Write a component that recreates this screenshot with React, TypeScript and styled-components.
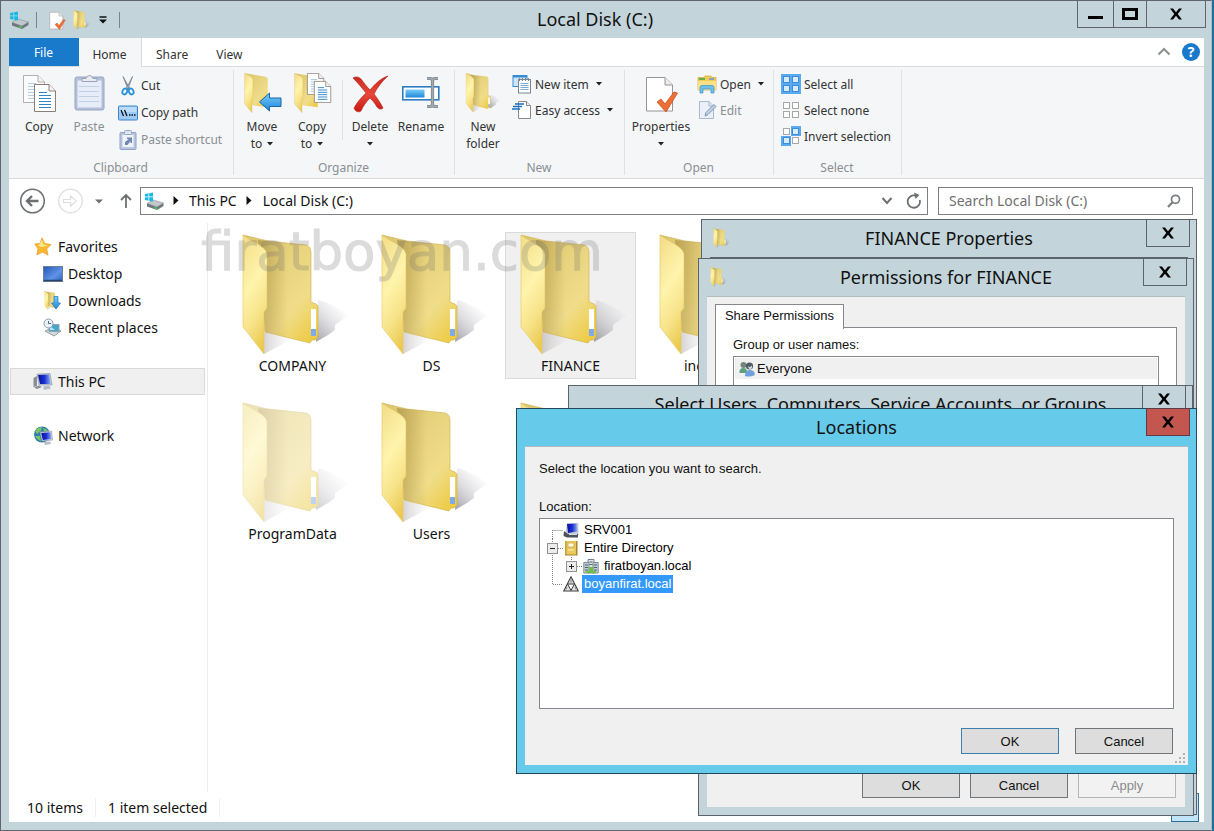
import React from "react";
import styled, { createGlobalStyle, css } from "styled-components";

const GlobalStyle = createGlobalStyle`
  * { box-sizing: border-box; }
  body {
    margin: 0;
    background: #1f6f97;
    font-family: "Noto Sans", "Open Sans", sans-serif;
    font-size: 14px;
    color: #111;
  }
  button, input { font: inherit; color: inherit; }
  button {
    display: inline-flex;
    align-items: center;
    justify-content: center;
    padding: 0;
    margin: 0;
    border: 0;
    background: none;
  }
  ul { list-style: none; margin: 0; padding: 0; }
  h1, h2, p { margin: 0; font-weight: 400; }
  svg { display: block; flex: none; }
`;

const frame = "#c3d5db";
const uiFont = `"Liberation Sans", Arial, sans-serif`;

/* ---------- icons ---------- */

const GradientSheet = styled.svg`
  position: absolute;
`;

const SharedGradients = () => (
  <GradientSheet width="0" height="0" aria-hidden="true">
    <defs>
      <linearGradient id="folderBack" x1="0.1" y1="0" x2="0.9" y2="1">
        <stop offset="0" stopColor="#dcc570" />
        <stop offset="0.35" stopColor="#e7d27c" />
        <stop offset="0.7" stopColor="#f0dd8a" />
        <stop offset="1" stopColor="#edca40" />
      </linearGradient>
      <linearGradient id="folderFold" x1="0" y1="0" x2="1" y2="0">
        <stop offset="0" stopColor="#8d7430" stopOpacity="0.45" />
        <stop offset="1" stopColor="#8d7430" stopOpacity="0" />
      </linearGradient>
      <linearGradient id="folderFront" x1="0.3" y1="0" x2="0.6" y2="1">
        <stop offset="0" stopColor="#f4e08c" />
        <stop offset="0.4" stopColor="#fff4ac" />
        <stop offset="0.7" stopColor="#f7e38a" />
        <stop offset="1" stopColor="#ebc94e" />
      </linearGradient>
      <linearGradient id="folderShadow" x1="0" y1="1" x2="0.7" y2="0.1">
        <stop offset="0" stopColor="#6e6e78" stopOpacity="0.65" />
        <stop offset="0.5" stopColor="#8a8a94" stopOpacity="0.3" />
        <stop offset="1" stopColor="#9a9aa4" stopOpacity="0" />
      </linearGradient>
      <linearGradient id="folderGlow" x1="0" y1="0" x2="1" y2="0">
        <stop offset="0" stopColor="#7a6d6d" stopOpacity="0.3" />
        <stop offset="1" stopColor="#b0b0b0" stopOpacity="0" />
      </linearGradient>
      <linearGradient id="blueArrow" x1="0" y1="0" x2="0" y2="1">
        <stop offset="0" stopColor="#7ccdf8" />
        <stop offset="1" stopColor="#1d86da" />
      </linearGradient>
      <linearGradient id="redCross" x1="0" y1="0" x2="0" y2="1">
        <stop offset="0" stopColor="#c7261d" />
        <stop offset="0.5" stopColor="#e8483a" />
        <stop offset="1" stopColor="#c91a10" />
      </linearGradient>
      <linearGradient id="screenBlue" x1="0" y1="0" x2="1" y2="1">
        <stop offset="0" stopColor="#2256b8" />
        <stop offset="0.6" stopColor="#5f93e6" />
        <stop offset="1" stopColor="#2f62c0" />
      </linearGradient>
      <linearGradient id="monitorBlue" x1="0" y1="0" x2="1" y2="0">
        <stop offset="0" stopColor="#0a12a0" />
        <stop offset="0.5" stopColor="#1a2fd0" />
        <stop offset="1" stopColor="#8fb0f4" />
      </linearGradient>
    </defs>
  </GradientSheet>
);

const FolderShapes = () => (
  <>
    <path d="M78 66 C90 69 100 75 109 81 L95 91 L95 96 L88 101 L76 108Z" fill="url(#folderShadow)" />
    <path d="M24 98 L52 105 L24 120Z" fill="url(#folderGlow)" />
    <path d="M3 1 L28 7 L66 11 Q71 12 71 19 L71 68 L76 70 Q78 71 78 73 L78 103 L75 106 L72 106 L70 109 L25 98Z" fill="url(#folderBack)" stroke="#cfae4a" strokeWidth="0.6" />
    <path d="M18 6 L48 9 L48 103 L25 98Z" fill="url(#folderFold)" />
    <path d="M71 75 h5 v26 h-5z" fill="#fff" />
    <path d="M71 95 h5 v7 h-5z" fill="#7fa9e8" />
    <path d="M3 1 C10 7 26 12 27 20 L27 74 L24 78 L24 120 L3 93Z" fill="url(#folderFront)" stroke="#e4c661" strokeWidth="0.6" />
  </>
);

const Folder = ({ size = 122, faded = false }: { size?: number; faded?: boolean }) => (
  <svg width={Math.round((size * 110) / 122)} height={size} viewBox={size > 60 ? "-2 0 110 122" : "0 0 110 122"} opacity={faded ? 0.5 : 1} overflow="visible">
    <FolderShapes />
  </svg>
);

const Caret = ({ color = "#222" }: { color?: string }) => (
  <svg width="6" height="4" viewBox="0 0 6 4"><path d="M0 0 H6 L3 3.5Z" fill={color} /></svg>
);

const Sheet = ({ x, y, s = 1, lines = "#2d86c8" }: { x: number; y: number; s?: number; lines?: string }) => (
  <g transform={`translate(${x} ${y}) scale(${s})`}>
    <path d="M0.5 0.5 H15 L21.5 7 V27.5 H0.5Z" fill="#fff" stroke="#8a7f7a" />
    <path d="M15 0.5 V7 H21.5" fill="#f3f3f3" stroke="#8a7f7a" />
    <path d="M5 8.5h8M5 11.5h12M5 14.5h12M5 17.5h12M5 20.5h12M5 23.5h12" stroke={lines} strokeWidth="1.2" />
  </g>
);

const CopyIcon = () => (
  <svg width="36" height="40" viewBox="0 0 36 40">
    <g opacity="0.6"><Sheet x={2} y={2} lines="#8fb4d2" /></g>
    <Sheet x={13} y={11} />
  </svg>
);

const Clip = ({ shortcut = false }: { shortcut?: boolean }) => (
  <svg width={shortcut ? 18 : 34} height={shortcut ? 20 : 40} viewBox={shortcut ? "0 0 18 20" : "0 0 34 40"}>
    {shortcut ? (
      <>
        <rect x="1" y="2.5" width="16" height="17" rx="1" fill="#b9c6de" stroke="#8fa2c4" />
        <rect x="3.5" y="5" width="11" height="12" fill="#eef3fb" />
        <rect x="5.5" y="0.5" width="7" height="4" rx="1" fill="#dfe5ef" stroke="#98a7c2" />
        <path d="M6 15 V12 L10 9 H8 V7.5 H13 V13 H11.5 V11 L8.5 15Z" fill="#6f86ae" />
      </>
    ) : (
      <>
        <rect x="3" y="4" width="29" height="33" rx="2" fill="#b3c0d8" stroke="#98a7c4" />
        <path d="M5.5 7.5 H29.5 V34.5 H5.5Z" fill="#e6edf8" />
        <path d="M7 13.5h20M7 18.5h20M7 23.5h20M7 28.5h20" stroke="#c3cfe2" />
        <path d="M10 8.5 V5.5 H14 Q15 2.5 17.5 2.5 Q20 2.5 21 5.5 H25 V8.5Z" fill="#e8ebf0" stroke="#98a3b8" />
      </>
    )}
  </svg>
);

const CutIcon = () => (
  <svg width="14" height="20" viewBox="0 0 14 20">
    <path d="M2 0.5 L8.5 12 L7 13Z" fill="#8b95a0" stroke="#7b8590" strokeWidth="0.8" />
    <path d="M11.5 0.5 L5.5 12 L7 13Z" fill="#a9b3bd" stroke="#7b8590" strokeWidth="0.8" />
    <ellipse cx="3.8" cy="15.5" rx="2.3" ry="3" fill="none" stroke="#2791d8" strokeWidth="1.8" transform="rotate(25 3.8 15.5)" />
    <ellipse cx="10.2" cy="15.5" rx="2.3" ry="3" fill="none" stroke="#2791d8" strokeWidth="1.8" transform="rotate(-25 10.2 15.5)" />
  </svg>
);

const CopyPathIcon = () => (
  <svg width="20" height="16" viewBox="0 0 20 16">
    <rect x="0.5" y="1" width="19" height="14" rx="1" fill="#9ccaf7" stroke="#3e84cc" />
    <rect x="1.5" y="2" width="17" height="5" fill="#bcdcfb" />
    <path d="M3 5 L5.5 11 M6.5 5 L9 11" stroke="#111" strokeWidth="1.3" />
    <path d="M11 10h1.5M13.5 10h1.5M16 10h1.5" stroke="#111" strokeWidth="1.5" />
  </svg>
);

const MoveToIcon = () => (
  <svg width="40" height="40" viewBox="0 0 40 40">
    <g transform="translate(2 0) scale(0.33)">
      <path d="M3 1 L66 11 Q72 12 72 19 V104 L25 98Z" fill="url(#folderBack)" />
      <path d="M2 1 C10 6 26 11 27 20 V74 L24 78 V120 L2 93Z" fill="url(#folderFront)" stroke="#d8b64e" />
    </g>
    <path d="M17.5 29 L27.5 20 V25 H39 V33.5 H27.5 V38Z" fill="url(#blueArrow)" stroke="#1667ae" />
  </svg>
);

const CopyToIcon = () => (
  <svg width="40" height="40" viewBox="0 0 40 40">
    <g transform="translate(2 0) scale(0.33)">
      <path d="M3 1 L66 11 Q72 12 72 19 V104 L25 98Z" fill="url(#folderBack)" />
    </g>
    <Sheet x={15} y={0} s={0.78} lines="#9cc3e2" />
    <g transform="translate(2 0) scale(0.33)">
      <path d="M2 1 C10 6 26 11 27 20 V74 L24 78 V120 L2 93Z" fill="url(#folderFront)" stroke="#d8b64e" />
    </g>
    <Sheet x={22} y={8} s={0.78} />
  </svg>
);

const DeleteIcon = () => (
  <svg width="38" height="40" viewBox="0 0 38 40">
    <path d="M2 5 C5 3 8 4 10 6 C13 10 16 14 19 17 C24 11 30 5 37 3 C31 8 26 15 23 21 C27 26 30 31 32 35 C30 37 28 36 26 34 C24 30 21 27 19 25 C15 29 12 33 10 38 C7 40 4 38 3 35 C6 29 11 24 15 20 C11 15 7 10 2 5Z" fill="url(#redCross)" stroke="#b01810" strokeWidth="0.6" />
  </svg>
);

const beam = "M25 5.5 H28 Q30.5 5.5 30.5 8 Q30.5 5.5 33 5.5 H36 M30.5 7 V32 M25 33.5 H28 Q30.5 33.5 30.5 31 Q30.5 33.5 33 33.5 H36";
const RenameIcon = () => (
  <svg width="38" height="40" viewBox="0 0 38 40">
    <rect x="0.8" y="13.8" width="36" height="13" fill="#fff" stroke="#2d7cc0" strokeWidth="1.6" />
    <rect x="3.5" y="16.5" width="19" height="8" fill="url(#blueArrow)" />
    <path d={beam} fill="none" stroke="#7e868e" strokeWidth="3.2" />
    <path d={beam} fill="none" stroke="#a2aab2" strokeWidth="1.5" />
  </svg>
);

const NewItemIcon = () => (
  <svg width="20" height="20" viewBox="0 0 20 20">
    <rect x="1" y="1.5" width="14" height="11" fill="#cfe6fa" stroke="#3b8bd0" />
    <path d="M1 2.5h14" stroke="#3b8bd0" strokeWidth="2" />
    <rect x="6.5" y="5.5" width="12" height="13.5" fill="#fff" stroke="#7d8790" />
    <path d="M7.5 4v3M10.5 4v3M13.5 4v3M16.5 4v3" stroke="#7d8790" />
    <path d="M8.5 9.5h8M8.5 11.5h8M8.5 13.5h8M8.5 15.5h8" stroke="#7fa9cf" />
  </svg>
);

const EasyAccessIcon = () => (
  <svg width="20" height="20" viewBox="0 0 20 20">
    <path d="M6.5 1.5 H14.5 L18.5 5.5 V18.5 H6.5Z" fill="#fff" stroke="#8a8a8a" />
    <path d="M14.5 1.5 V5.5 H18.5" fill="#eee" stroke="#8a8a8a" />
    <path d="M3 4h9M1 6.5h9M0 9h8" stroke="#1b6fc4" strokeWidth="1.4" />
  </svg>
);

const PropertiesIcon = ({ w = 34, h = 40 }: { w?: number; h?: number }) => (
  <svg width={w} height={h} viewBox="0 0 34 40">
    <path d="M2.5 4.5 H21 L28.5 12 V38 H2.5Z" fill="#fff" stroke="#9a9296" />
    <path d="M21 4.5 V12 H28.5" fill="#ececec" stroke="#9a9296" />
    <path d="M13 29 L17 26 L21 31 L30 19 L33.5 20 L22 39 Z" fill="#ee6f35" stroke="#c94f1c" strokeWidth="0.8" />
  </svg>
);

const OpenIcon = () => (
  <svg width="20" height="20" viewBox="0 0 20 20">
    <path d="M1 3.5 H7 L8 2 H14 L15 3.5 H19 V16 H1Z" fill="#f0cd55" stroke="#d3a83a" strokeWidth="0.7" />
    <path d="M2 4 h6 v2 h-6z" fill="#6ab04a" /><path d="M12 4 h5 v2 h-5z" fill="#8f9ec0" />
    <path d="M1 7 H19 V16 H1Z" fill="#f9e085" />
    <path d="M3 19 V13.5 Q3 11.5 5 11.5 H15 Q17 11.5 17 13.5 V19 H14 V15 H6 V19Z" fill="#6fc0ea" stroke="#3b94cc" strokeWidth="0.7" />
  </svg>
);

const EditIcon = () => (
  <svg width="20" height="20" viewBox="0 0 20 20">
    <path d="M2.5 1.5 H12 L16.5 6 V18.5 H2.5Z" fill="#e9f0f9" stroke="#a9b8cc" />
    <path d="M12 1.5 V6 H16.5" fill="#d8e2f0" stroke="#a9b8cc" />
    <path d="M8 16 L9 12.5 L17 4.5 L19 6.5 L11 14.5Z" fill="#c3d2e6" stroke="#7c93b4" />
  </svg>
);

const SelectIcon = ({ on }: { on: [boolean, boolean, boolean, boolean] }) => (
  <svg width="20" height="20" viewBox="0 0 20 20">
    {on.map((v, i) => {
      const x = (i % 2) * 10;
      const y = Math.floor(i / 2) * 10;
      const dx = i % 2 ? 1 : 2;
      const dy = i > 1 ? 1 : 2;
      return (
        <g key={i}>
          {v && <rect x={x} y={y} width="10" height="10" fill="#5aaaf0" />}
          <rect x={x + dx + 0.5} y={y + dy + 0.5} width="6" height="6" fill={v ? "#d6ebfd" : "#fff"} stroke={v ? "#3f8bd6" : "#a8a8a8"} />
        </g>
      );
    })}
  </svg>
);

const DriveIcon = () => (
  <svg width="20" height="18" viewBox="0 0 20 18">
    <path d="M3 11.5 L9 8 L19.5 11 L13 15Z" fill="#c3c8cc" stroke="#8a9198" strokeWidth="0.6" />
    <path d="M3 11.5 L13 15 L19.5 11 V14 L13 18 L3 14.5Z" fill="#6f777e" />
    <path d="M10 15.5 l3 1" stroke="#3bd04a" strokeWidth="1.6" />
    <path d="M1 2 L4.5 1.3 V4.5 H1Z M5.2 1.2 L9 0.5 V4.5 H5.2Z M1 5.3 H4.5 V8.7 L1 8Z M5.2 5.3 H9 V9.5 L5.2 8.8Z" fill="#17b9e6" />
  </svg>
);

const StarIcon = () => (
  <svg width="18" height="19" viewBox="0 0 18 19">
    <path d="M8 0.8 L10.8 6.5 L17 7.5 L12.8 11.8 L14 18.2 L8.5 15 L2.8 18 L4 11.8 L0.8 7 L6 6.3Z" fill="#f8b92e" stroke="#e79a34" strokeWidth="0.7" />
    <path d="M8 3 L9.7 7.5 L14 8.5 L8 10 L4 9Z" fill="#fde58a" />
  </svg>
);

const DesktopIcon = () => (
  <svg width="20" height="16" viewBox="0 0 20 16">
    <rect x="0.5" y="0.5" width="19" height="15" fill="url(#screenBlue)" stroke="#6f8096" />
    <path d="M1 14.5h18" stroke="#27436f" strokeWidth="1.5" />
  </svg>
);

const DownloadsIcon = () => (
  <svg width="20" height="19" viewBox="0 0 20 19">
    <g transform="translate(1 0) scale(0.155)"><FolderShapes /></g>
    <path d="M11 5.5 H15 V12 H17.5 L13 18 L8.5 12 H11Z" fill="url(#blueArrow)" stroke="#1a73bd" strokeWidth="0.7" />
  </svg>
);

const RecentIcon = () => (
  <svg width="20" height="19" viewBox="0 0 20 19">
    <path d="M2 13 L10 9.5 L18 13 L11 18Z" fill="#d5dadf" stroke="#7d868e" strokeWidth="0.8" />
    <rect x="6" y="6.5" width="10" height="7" fill="#45a6c9" stroke="#93a4b0" />
    <path d="M7 8 L12 12 H7Z" fill="#b6e5f2" />
    <circle cx="5.5" cy="5.5" r="4.5" fill="#e8f1f8" stroke="#8fa0b0" />
    <path d="M5.5 3 V5.5 H8" stroke="#56677a" fill="none" />
  </svg>
);

const PcIcon = ({ w = 20, h = 18 }: { w?: number; h?: number }) => (
  <svg width={w} height={h} viewBox="0 0 20 18">
    <path d="M0.500 5 L4 3 V13 L0.500 14Z M1 14.5 L6 12.500 L9 14 L4 16Z" fill="#8a8e96" />
    <path d="M4 1 L17 0.500 L19 12 L6 12Z" fill="#c6ccd6" stroke="#8a91a0" strokeWidth="0.6" />
    <path d="M5 2 L16 1.500 L17.7 11 L7 11Z" fill="url(#monitorBlue)" />
    <path d="M10 13.500 L16 12.500 L18 15.500 L11 17Z" fill="#b9bec6" />
  </svg>
);

const ServerIcon = () => (
  <svg width="16" height="16" viewBox="0 0 16 16">
    <path d="M4 1 H15.5 V13 H2Z" fill="#c9ccd2" />
    <path d="M4 2 L13.5 1.5 L14.5 9.5 L5 11Z" fill="url(#monitorBlue)" />
    <path d="M1 9 L5 12 H15 V15.5 H4 L0.5 14Z" fill="#4d525c" />
    <path d="M6 12.5h8" stroke="#d8dbe0" />
  </svg>
);

const NetworkIcon = () => (
  <svg width="20" height="20" viewBox="0 0 20 20">
    <circle cx="9" cy="8.5" r="8" fill="#2f7fa8" />
    <path d="M2 5 Q5 1 9 1 L8 5 L4 8Z M10 2 Q14 3 15 5 L11 5Z M2 10 L7 10 L8 15 Q4 14 2 10Z" fill="#79c26a" />
    <path d="M7 6 L18.5 5 L19.5 14 L9 15Z" fill="#d2d7e0" stroke="#8b93a3" strokeWidth="0.6" />
    <path d="M8.2 7 L17.5 6.2 L18.5 13 L9.8 14Z" fill="url(#monitorBlue)" />
    <path d="M11 16 L17 15.5 L18 18 L12 19Z" fill="#b9bec6" />
  </svg>
);

const UsersIcon = () => (
  <svg width="16" height="16" viewBox="0 0 16 16">
    <path d="M0.5 12 Q0 7 4.5 7 Q8 7 8.5 12Z" fill="#5fa07c" /><circle cx="4.5" cy="4" r="3" fill="#75877b" />
    <path d="M6 15 Q6 9.5 10.5 9 Q16 9 15.8 14 Q11 16.5 6 15Z" fill="#6f9fdc" />
    <circle cx="10.5" cy="5" r="3.6" fill="#4f5b66" />
    <path d="M9 5 Q11 7 13 4.5 Q13.5 8 11 8.5 Q9 8 9 5Z" fill="#d6dbde" />
  </svg>
);

const DirectoryIcon = () => (
  <svg width="16" height="16" viewBox="0 0 16 16">
    <path d="M2 1 H14 V15 H2Z" fill="#e9c95c" /><path d="M2 1 H3.5 V15 H2Z" fill="#c7a23c" />
    <path d="M13 1 H14.5 V15.5 H2 V14.5 H13Z" fill="#a8842a" />
    <rect x="5" y="3" width="6" height="4" fill="#fffbe2" stroke="#c3a144" strokeWidth="0.7" />
    <path d="M5 10h6" stroke="#fff3b4" />
  </svg>
);

const DomainIcon = () => (
  <svg width="16" height="16" viewBox="0 0 16 16">
    <path d="M5 1.5 H11 V15 H5Z" fill="#dfe5e8" stroke="#66757f" strokeWidth="0.9" />
    <path d="M0.8 4.5 H6 V15 H0.8Z M10 4.5 H15.2 V15 H10Z" fill="#c2ced4" stroke="#75848e" strokeWidth="0.9" />
    <path d="M2 7h3M2 9.5h3M2 12h3M11 7h3M11 9.5h3M11 12h3M6.5 4h3M6.5 6.5h3" stroke="#4c6170" />
    <path d="M6 9 H10 V15 H6Z M3 13 H6 V15 H3Z M10 13 H13 V15 H10Z" fill="#6cc04a" />
  </svg>
);

const ForestIcon = () => (
  <svg width="16" height="16" viewBox="0 0 16 16">
    <path d="M8 0.8 L15.3 15 H0.7Z" fill="#e3e3e3" stroke="#3c3c3c" strokeWidth="1.1" />
    <path d="M4.5 8 H11.5 L8 14.5Z" fill="#fff" stroke="#3c3c3c" />
    <path d="M8 2.5 V7 M4 11 L3 13.5 M12 11 L13 13.5" stroke="#888" />
  </svg>
);

const CloseGlyph = () => (
  <svg width="14" height="12" viewBox="0 0 14 12"><path d="M1 0.5 H4 L7 4.2 L10 0.5 H13 L8.7 6 L13 11.5 H10 L7 7.8 L4 11.5 H1 L5.3 6Z" fill="#000" /></svg>
);

/* ---------- explorer window ---------- */

const Desktop = styled.div`
  position: relative;
  min-height: 100vh;
  display: flex;
  padding-right: 2px;
  overflow: hidden;
`;

const Explorer = styled.main`
  flex: 1;
  display: flex;
  flex-direction: column;
  background: ${frame};
  border: 1px solid #60646d;
  border-right-color: #a9bcc4;
`;

const TitleBar = styled.header`
  display: flex;
  align-items: center;
  height: 37px;
  padding: 0 5px 0 8px;
`;

const QuickAccess = styled.div`
  display: flex;
  align-items: center;
  button { height: 22px; }
`;
const QuickButton = styled.button<{ $gap: number }>`margin-left: ${(p) => p.$gap}px;`;
const QuickDivider = styled.span<{ $gap: number }>`
  width: 1px;
  height: 16px;
  margin-left: ${(p) => p.$gap}px;
  background: #7b868c;
`;

const WindowTitle = styled.h1`
  flex: 1;
  padding: 0 8px 2px 0;
  text-align: center;
  font-size: 18px;
  line-height: 24px;
`;

const CaptionButton = styled.button<{ $w: number }>`
  align-self: flex-start;
  width: ${(p) => p.$w}px;
  height: 28px;
  margin: -1px 0 0 -1px;
  border: 1px solid #60646d;
`;

const Client = styled.div`
  flex: 1;
  display: flex;
  flex-direction: column;
  margin: 0 7px 8px 8px;
  background: #fff;
`;

const TabStrip = styled.nav`
  display: flex;
  height: 29px;
  font-size: 12px;
  border-bottom: 1px solid #d9dadb;
`;
const RibbonTab = styled.button<{ $kind?: "file" | "active" }>`
  height: 28px;
  padding: 5px 14px 0;
  color: #333;
  ${(p) => p.$kind === "file" && css`width: 70px; padding: 0 1px 0 0; background: #1979ca; color: #fff;`}
  ${(p) => p.$kind === "active" && css`
    height: 29px;
    width: 63px;
    padding: 4px 1px 0 0;
    background: #f4f6f8;
    border-right: 1px solid #d9dadb;
  `}
`;
const StripTools = styled.div`
  display: flex;
  align-items: center;
  gap: 11px;
  margin-left: auto;
  padding-right: 4px;
`;
const HelpButton = styled.button`
  width: 18px;
  height: 18px;
  border-radius: 9px;
  background: #1979ca;
  color: #fff;
  font-size: 14px;
  line-height: 18px;
  font-weight: 700;
`;

const Ribbon = styled.div`
  display: flex;
  height: 112px;
  padding: 3px 0;
  background: #f4f6f8;
  border-bottom: 1px solid #d9dadb;
  font-size: 12px;
  color: #333;
`;
const Group = styled.section<{ $w: number }>`
  display: flex;
  flex-direction: column;
  flex: none;
  width: ${(p) => p.$w}px;
  border-right: 1px solid #dfe1e3;
`;
const GroupBody = styled.div<{ $pad: number }>`
  flex: 1;
  display: flex;
  align-items: flex-start;
  padding-left: ${(p) => p.$pad}px;
`;
const GroupName = styled.h2`
  padding-right: 1px;
  text-align: center;
  font-size: 12px;
  line-height: 15px;
  color: #8b8f93;
`;
const BigButton = styled.button<{ $w?: number }>`
  width: ${(p) => p.$w ?? 50}px;
  flex-direction: column;
  justify-content: flex-start;
  padding-top: 3px;
  line-height: 17px;
  &:disabled { color: #8b8f93; }
`;
const BigIcon = styled.span`
  display: flex;
  justify-content: center;
  align-items: center;
  height: 40px;
  margin-bottom: 5px;
`;
const BigLine = styled.span`
  display: flex;
  align-items: center;
  gap: 5px;
  height: 17px;
`;
const BodyDivider = styled.span`
  width: 1px;
  height: 60px;
  margin: 10px 2px 0 5px;
  background: #dfe1e3;
`;
const SmallColumn = styled.div<{ $left: number; $top?: number }>`
  display: flex;
  flex-direction: column;
  align-items: flex-start;
  padding: ${(p) => p.$top ?? 1}px 0 0 ${(p) => p.$left}px;
`;
const SmallButton = styled.button<{ $h?: number }>`
  height: ${(p) => p.$h ?? 26}px;
  gap: 3px;
  white-space: nowrap;
  &:disabled { color: #8b8f93; }
`;
const SmallIcon = styled.span`
  display: flex;
  justify-content: center;
  width: 20px;
`;
const SmallCaret = styled.span`margin-left: 4px;`;

const Address = styled.div`
  display: flex;
  align-items: center;
  height: 44px;
  padding: 0 11px 0 10px;
`;
const RoundButton = styled.button`
  width: 26px;
  height: 26px;
  margin-right: 12px;
`;
const PlainButton = styled.button<{ $w: number; $after: number }>`
  width: ${(p) => p.$w}px;
  height: 26px;
  margin-right: ${(p) => p.$after}px;
`;
const PathBox = styled.div`
  flex: 1;
  display: flex;
  align-items: center;
  height: 28px;
  padding: 0 5px 0 3px;
  border: 1px solid #7d7f84;
`;
const Crumb = styled.button<{ $before: number }>`
  gap: ${(p) => p.$before}px;
  padding: 0 0 2px 9px;
`;
const PathTools = styled.div`
  display: flex;
  align-items: center;
  gap: 13px;
  margin-left: auto;
`;
const SearchBox = styled.label`
  display: flex;
  align-items: center;
  width: 255px;
  height: 28px;
  margin-left: 10px;
  padding: 0 11px 0 10px;
  border: 1px solid #7d7f84;
`;
const SearchInput = styled.input`
  flex: 1;
  min-width: 0;
  padding: 0 0 2px;
  border: 0;
  outline: 0;
  background: none;
  &::placeholder { color: #707070; opacity: 1; }
`;

const Panes = styled.div`
  flex: 1;
  display: flex;
`;
const Sidebar = styled.aside`
  flex: none;
  width: 199px;
  padding: 10px 2px 0 1px;
  border-right: 1px solid #ececee;
`;
const SideGroup = styled.ul`margin-bottom: 27px;`;
const SideItem = styled.button<{ $child?: boolean; $on?: boolean }>`
  width: 195px;
  height: 27px;
  justify-content: flex-start;
  gap: 5px;
  padding-left: ${(p) => (p.$child ? 32 : 22)}px;
  border: 1px solid ${(p) => (p.$on ? "#d9d9d9" : "transparent")};
  background: ${(p) => (p.$on ? "#f0f0f0" : "transparent")};
`;
const SideIcon = styled.span`
  display: flex;
  justify-content: center;
  width: 20px;
`;

const Files = styled.section`
  position: relative;
  flex: 1;
  padding: 9px 0 0 19px;
`;
const FileGrid = styled.div`
  display: grid;
  grid-template-columns: repeat(4, 131px);
  gap: 21px 8px;
`;
const FileTile = styled.button<{ $on?: boolean }>`
  height: 147px;
  flex-direction: column;
  justify-content: flex-start;
  padding: 1px 0 0;
  line-height: 20px;
  border: 1px solid ${(p) => (p.$on ? "#dadada" : "transparent")};
  background: ${(p) => (p.$on ? "#f0f0f0" : "transparent")};
`;
const Watermark = styled.span`
  position: absolute;
  left: -7px;
  top: -6px;
  font-family: "DejaVu Sans", sans-serif;
  font-size: 53px;
  line-height: 70px;
  color: #6e6e6e;
  -webkit-text-stroke: 1px #6e6e6e;
  opacity: 0.24;
  pointer-events: none;
`;

const StatusBar = styled.footer`
  display: flex;
  align-items: center;
  height: 30px;
  padding: 0 5px 0 18px;
`;
const StatusText = styled.span`
  padding-right: 12px;
  margin-right: 12px;
  border-right: 1px solid #f0f0f0;
`;
const ViewButton = styled.button`
  width: 28px;
  height: 29px;
  margin-left: auto;
  border: 1px solid #2f6f96;
  background: #c0e4fa;
`;

/* ---------- dialogs ---------- */

const DialogWindow = styled.section<{ $x: number; $y: number; $w: number; $h: number; $active?: boolean }>`
  position: absolute;
  left: ${(p) => p.$x}px;
  top: ${(p) => p.$y}px;
  width: ${(p) => p.$w}px;
  height: ${(p) => p.$h}px;
  display: flex;
  flex-direction: column;
  border: 1px solid ${(p) => (p.$active ? "#23485a" : "#5c636c")};
  background: ${(p) => (p.$active ? "#66caeb" : frame)};
`;
const DialogHeader = styled.header`
  display: grid;
  grid-template-columns: 1fr auto 1fr;
  align-items: center;
  height: 37px;
  flex: none;
  padding: 0 6px;
`;
const DialogIcon = styled.span`padding: 0 0 2px 5px;`;
const DialogTitle = styled.h2`
  padding-bottom: 2px;
  font-size: 18px;
  line-height: 24px;
  white-space: nowrap;
`;
const DialogClose = styled.button<{ $red?: boolean }>`
  justify-self: end;
  align-self: start;
  width: 44px;
  height: 28px;
  margin-top: -1px;
  border: 1px solid ${(p) => (p.$red ? "#5f3b45" : "#5c636c")};
  background: ${(p) => (p.$red ? "#c3574f" : "transparent")};
`;
const DialogBody = styled.div<{ $dark?: boolean; $pad: string }>`
  position: relative;
  flex: 1;
  display: flex;
  flex-direction: column;
  margin: 0 8px 8px;
  padding: ${(p) => p.$pad};
  border-top: 1px solid ${(p) => (p.$dark ? "#5c636c" : "#b4bcc0")};
  background: #f0f0f0;
  font-family: ${uiFont};
  font-size: 13px;
  line-height: 18px;
`;
const DialogTab = styled.button`
  position: relative;
  align-self: flex-start;
  width: 129px;
  height: 25px;
  margin-bottom: -2px;
  padding-bottom: 2px;
  border: 1px solid #85888c;
  border-bottom: 0;
  background: #fff;
`;
const TabPanel = styled.div`
  flex: 1;
  padding: 8px 17px;
  border: 1px solid #85888c;
  background: #fff;
`;
const NameList = styled.ul`
  height: 120px;
  margin-top: 2px;
  padding: 1px;
  border: 1px solid #85888c;
`;
const NameRow = styled.li`
  display: flex;
  align-items: center;
  gap: 2px;
  height: 21px;
  padding-left: 4px;
  background: #f0f0f0;
`;
const Buttons = styled.div<{ $gap: number; $top: number }>`
  display: flex;
  justify-content: flex-end;
  gap: ${(p) => p.$gap}px;
  padding: ${(p) => p.$top}px 1px 0 0;
`;
const DialogButton = styled.button<{ $default?: boolean }>`
  width: 98px;
  height: 26px;
  padding-top: 1px;
  border: 1px solid ${(p) => (p.$default ? "#3c7fb1" : "#70757a")};
  background: #dddddd;
  &:disabled { color: #8b8b8b; border-color: #b4b7ba; background: #f2f2f2; }
`;
const FieldLabel = styled.p`margin-top: 20px;`;
const Tree = styled.ul`
  height: 191px;
  margin-top: 2px;
  padding: 2px 3px;
  border: 1px solid #828790;
  background: #fff;
`;
const TreeRow = styled.li`
  display: flex;
  align-items: center;
  height: 18px;
`;
const TreeLabel = styled.span<{ $on?: boolean }>`
  margin-left: 3px;
  padding: 0 2px;
  background: ${(p) => (p.$on ? "#3399ff" : "transparent")};
  color: ${(p) => (p.$on ? "#fff" : "#000")};
`;
const Grip = styled.span`
  position: absolute;
  right: 2px;
  bottom: 1px;
`;

const Guide = ({ kind }: { kind: "first" | "minus" | "pass" | "plus" | "last" }) => {
  const paths = {
    first: "M9.5 9 V18 M9.5 9.5 H20",
    minus: "M9.5 0 V18 M15 9.5 H20",
    pass: "M9.5 0 V18",
    plus: "M8.5 0 V9 M14 9.5 H20",
    last: "M9.5 0 V9.5 H20",
  };
  const boxX = kind === "plus" ? 3.5 : 4.5;
  return (
    <svg width="20" height="18" viewBox="0 0 20 18">
      <path d={paths[kind]} stroke="#808080" strokeDasharray="1 1" fill="none" />
      {(kind === "minus" || kind === "plus") && (
        <>
          <rect x={boxX} y="4.5" width="10" height="10" fill="#ececec" stroke="#919191" />
          <path d={`M${boxX + 2.5} 9.5h5`} stroke="#222" />
          {kind === "plus" && <path d="M8.5 7v5" stroke="#222" />}
        </>
      )}
    </svg>
  );
};

type DialogProps = {
  title: string;
  x: number; y: number; w: number; h: number;
  icon?: boolean; active?: boolean; dark?: boolean; pad?: string;
  children?: React.ReactNode;
};
const Dialog = ({ title, x, y, w, h, icon, active, dark, pad = "0", children }: DialogProps) => (
  <DialogWindow role="dialog" aria-label={title} $x={x} $y={y} $w={w} $h={h} $active={active}>
    <DialogHeader>
      <DialogIcon>{icon && <Folder size={20} />}</DialogIcon>
      <DialogTitle>{title}</DialogTitle>
      <DialogClose $red={active} aria-label="Close"><CloseGlyph /></DialogClose>
    </DialogHeader>
    <DialogBody $dark={dark} $pad={pad}>{children}</DialogBody>
  </DialogWindow>
);

const Big = ({ icon, lines, caret, w, disabled }: { icon: React.ReactNode; lines: string[]; caret?: "inline" | "below"; w?: number; disabled?: boolean }) => (
  <BigButton $w={w} disabled={disabled}>
    <BigIcon>{icon}</BigIcon>
    {lines.map((l, i) => (
      <BigLine key={l}>{l}{caret === "inline" && i === lines.length - 1 && <Caret />}</BigLine>
    ))}
    {caret === "below" && <BigLine><Caret /></BigLine>}
  </BigButton>
);

const Small = ({ icon, text, caret, h, disabled }: { icon: React.ReactNode; text: string; caret?: boolean; h?: number; disabled?: boolean }) => (
  <SmallButton $h={h} disabled={disabled}>
    <SmallIcon>{icon}</SmallIcon>
    {text}
    {caret && <SmallCaret><Caret /></SmallCaret>}
  </SmallButton>
);

const files = [
  { name: "COMPANY" }, { name: "DS" }, { name: "FINANCE", on: true }, { name: "inetpub" },
  { name: "ProgramData", faded: true }, { name: "Users" }, { name: "" },
];

const CrumbArrow = () => (
  <svg width="6" height="9" viewBox="0 0 6 9"><path d="M0.5 0 L5.5 4.5 L0.5 9Z" fill="#111" /></svg>
);

export default function App() {
  return (
    <Desktop>
      <GlobalStyle />
      <SharedGradients />
      <Explorer>
        <TitleBar>
          <QuickAccess>
            <DriveIcon />
            <QuickDivider $gap={7} />
            <QuickButton $gap={11} aria-label="Properties"><PropertiesIcon w={18} h={20} /></QuickButton>
            <QuickButton $gap={7} aria-label="New folder"><Folder size={20} /></QuickButton>
            <QuickButton $gap={8} aria-label="Customize toolbar">
              <svg width="8" height="8" viewBox="0 0 8 8"><path d="M0.5 1h7" stroke="#111" strokeWidth="1.5" /><path d="M0 3.5 H8 L4 7.5Z" fill="#111" /></svg>
            </QuickButton>
            <QuickDivider $gap={12} />
          </QuickAccess>
          <WindowTitle>Local Disk (C:)</WindowTitle>
          <CaptionButton $w={37} aria-label="Minimize">
            <svg width="15" height="14" viewBox="0 0 15 14"><path d="M0 9h15v3H0z" fill="#000" /></svg>
          </CaptionButton>
          <CaptionButton $w={34} aria-label="Maximize">
            <svg width="16" height="12" viewBox="0 0 16 12"><rect x="1.5" y="1.5" width="13" height="9" fill="none" stroke="#000" strokeWidth="3" /></svg>
          </CaptionButton>
          <CaptionButton $w={60} aria-label="Close"><CloseGlyph /></CaptionButton>
        </TitleBar>

        <Client>
          <TabStrip>
            <RibbonTab $kind="file">File</RibbonTab>
            <RibbonTab $kind="active">Home</RibbonTab>
            <RibbonTab>Share</RibbonTab>
            <RibbonTab>View</RibbonTab>
            <StripTools>
              <button aria-label="Collapse ribbon">
                <svg width="14" height="11" viewBox="0 0 14 11"><path d="M1.5 7.500 L7 2 L12.5 7.500" fill="none" stroke="#8d9296" strokeWidth="2.2" /></svg>
              </button>
              <HelpButton aria-label="Help">?</HelpButton>
            </StripTools>
          </TabStrip>

          <Ribbon>
            <Group $w={225}>
              <GroupBody $pad={5}>
                <Big icon={<CopyIcon />} lines={["Copy"]} />
                <Big icon={<Clip />} lines={["Paste"]} disabled />
                <SmallColumn $left={4} $top={2}>
                  <Small h={27} icon={<CutIcon />} text="Cut" />
                  <Small h={27} icon={<CopyPathIcon />} text="Copy path" />
                  <Small h={27} icon={<Clip shortcut />} text="Paste shortcut" disabled />
                </SmallColumn>
              </GroupBody>
              <GroupName>Clipboard</GroupName>
            </Group>
            <Group $w={221}>
              <GroupBody $pad={3}>
                <Big icon={<MoveToIcon />} lines={["Move", "to"]} caret="inline" />
                <Big icon={<CopyToIcon />} lines={["Copy", "to"]} caret="inline" />
                <BodyDivider />
                <Big icon={<DeleteIcon />} lines={["Delete"]} caret="below" />
                <Big w={52} icon={<RenameIcon />} lines={["Rename"]} />
              </GroupBody>
              <GroupName>Organize</GroupName>
            </Group>
            <Group $w={170}>
              <GroupBody $pad={3}>
                <Big icon={<Folder size={40} />} lines={["New", "folder"]} />
                <SmallColumn $left={4}>
                  <Small icon={<NewItemIcon />} text="New item" caret />
                  <Small icon={<EasyAccessIcon />} text="Easy access" caret />
                </SmallColumn>
              </GroupBody>
              <GroupName>New</GroupName>
            </Group>
            <Group $w={149}>
              <GroupBody $pad={3}>
                <Big w={66} icon={<PropertiesIcon />} lines={["Properties"]} caret="below" />
                <SmallColumn $left={3}>
                  <Small icon={<OpenIcon />} text="Open" caret />
                  <Small icon={<EditIcon />} text="Edit" disabled />
                </SmallColumn>
              </GroupBody>
              <GroupName>Open</GroupName>
            </Group>
            <Group $w={128}>
              <GroupBody $pad={3}>
                <SmallColumn $left={4}>
                  <Small icon={<SelectIcon on={[true, true, true, true]} />} text="Select all" />
                  <Small icon={<SelectIcon on={[false, false, false, false]} />} text="Select none" />
                  <Small icon={<SelectIcon on={[false, true, true, false]} />} text="Invert selection" />
                </SmallColumn>
              </GroupBody>
              <GroupName>Select</GroupName>
            </Group>
          </Ribbon>

          <Address>
            <RoundButton aria-label="Back">
              <svg width="26" height="26" viewBox="0 0 26 26"><circle cx="13.5" cy="13" r="11.8" fill="none" stroke="#6d7073" strokeWidth="1.6" /><path d="M19.5 13 H9 M13 8 L8 13 L13 18" fill="none" stroke="#6d7073" strokeWidth="2.4" /></svg>
            </RoundButton>
            <RoundButton aria-label="Forward" disabled>
              <svg width="26" height="26" viewBox="0 0 26 26"><circle cx="13.5" cy="13" r="11.8" fill="none" stroke="#e2e2e2" strokeWidth="1.5" /><path d="M6.5 11.5 H13.5 V8 L19.5 13 L13.5 18 V14.5 H6.5Z" fill="none" stroke="#dedede" strokeWidth="1.2" /></svg>
            </RoundButton>
            <PlainButton $w={8} $after={15} aria-label="Recent locations"><svg width="8" height="5" viewBox="0 0 8 5"><path d="M0 0.5 H8 L4 4.5Z" fill="#6d7073" /></svg></PlainButton>
            <PlainButton $w={16} $after={6} aria-label="Up">
              <svg width="14" height="16" viewBox="0 0 14 16"><path d="M7 15 V2 M2 7 L7 2 L12 7" fill="none" stroke="#6d7073" strokeWidth="1.8" /></svg>
            </PlainButton>
            <PathBox>
              <DriveIcon />
              <Crumb $before={10}><CrumbArrow />This PC</Crumb>
              <Crumb $before={11}><CrumbArrow />Local Disk (C:)</Crumb>
              <PathTools>
                <button aria-label="Previous locations"><svg width="12" height="8" viewBox="0 0 12 8"><path d="M1.5 1 L6 6 L10.5 1" fill="none" stroke="#6d7073" strokeWidth="2" /></svg></button>
                <button aria-label="Refresh"><svg width="16" height="18" viewBox="0 0 16 18"><path d="M13.8 8 A6.2 6.2 0 1 1 9.5 3.6" fill="none" stroke="#6d7073" strokeWidth="1.8" /><path d="M8 0.5 L13.5 3 L9.5 7Z" fill="#6d7073" /></svg></button>
              </PathTools>
            </PathBox>
            <SearchBox>
              <SearchInput type="text" placeholder="Search Local Disk (C:)" aria-label="Search Local Disk (C:)" />
              <svg width="14" height="14" viewBox="0 0 14 14"><circle cx="8.5" cy="5.3" r="4" fill="none" stroke="#7b7f83" strokeWidth="1.7" /><path d="M5.5 8.3 L1 13" stroke="#7b7f83" strokeWidth="2.2" /></svg>
            </SearchBox>
          </Address>

          <Panes>
            <Sidebar>
              <SideGroup>
                <li><SideItem><SideIcon><StarIcon /></SideIcon>Favorites</SideItem></li>
                <li><SideItem $child><SideIcon><DesktopIcon /></SideIcon>Desktop</SideItem></li>
                <li><SideItem $child><SideIcon><DownloadsIcon /></SideIcon>Downloads</SideItem></li>
                <li><SideItem $child><SideIcon><RecentIcon /></SideIcon>Recent places</SideItem></li>
              </SideGroup>
              <SideGroup><li><SideItem $on><SideIcon><PcIcon /></SideIcon>This PC</SideItem></li></SideGroup>
              <SideGroup><li><SideItem><SideIcon><NetworkIcon /></SideIcon>Network</SideItem></li></SideGroup>
            </Sidebar>
            <Files aria-label="Files">
              <FileGrid>
                {files.map((f) => (
                  <FileTile key={f.name} $on={f.on}><Folder faded={f.faded} />{f.name}</FileTile>
                ))}
              </FileGrid>
              <Watermark>firatboyan.com</Watermark>
            </Files>
          </Panes>

          <StatusBar>
            <StatusText>10 items</StatusText>
            <StatusText>1 item selected</StatusText>
            <ViewButton aria-label="Large icons" />
          </StatusBar>
        </Client>
      </Explorer>

      <Dialog title="FINANCE Properties" x={701} y={219} w={496} h={596} icon dark />

      <Dialog title="Permissions for FINANCE" x={698} y={258} w={496} h={558} icon pad="7px 8px 9px">
        <DialogTab role="tab" aria-selected="true">Share Permissions</DialogTab>
        <TabPanel>
          <p>Group or user names:</p>
          <NameList>
            <NameRow><UsersIcon />Everyone</NameRow>
          </NameList>
        </TabPanel>
        <Buttons $gap={10} $top={9}>
          <DialogButton>OK</DialogButton>
          <DialogButton>Cancel</DialogButton>
          <DialogButton disabled>Apply</DialogButton>
        </Buttons>
      </Dialog>

      <Dialog title="Select Users, Computers, Service Accounts, or Groups" x={568} y={385} w={625} h={300} />

      <Dialog title="Locations" x={516} y={408} w={681} h={366} active pad="13px 14px 11px">
        <p>Select the location you want to search.</p>
        <FieldLabel id="location-label">Location:</FieldLabel>
        <Tree role="tree" aria-labelledby="location-label">
          <TreeRow role="treeitem"><Guide kind="first" /><ServerIcon /><TreeLabel>SRV001</TreeLabel></TreeRow>
          <TreeRow role="treeitem"><Guide kind="minus" /><DirectoryIcon /><TreeLabel>Entire Directory</TreeLabel></TreeRow>
          <TreeRow role="treeitem"><Guide kind="pass" /><Guide kind="plus" /><DomainIcon /><TreeLabel>firatboyan.local</TreeLabel></TreeRow>
          <TreeRow role="treeitem" aria-selected="true"><Guide kind="last" /><ForestIcon /><TreeLabel $on>boyanfirat.local</TreeLabel></TreeRow>
        </Tree>
        <Buttons $gap={16} $top={19}>
          <DialogButton $default>OK</DialogButton>
          <DialogButton>Cancel</DialogButton>
        </Buttons>
        <Grip>
          <svg width="11" height="11" viewBox="0 0 11 11"><path d="M8 0h2v2H8zM8 4h2v2H8zM4 4h2v2H4zM8 8h2v2H8zM4 8h2v2H4zM0 8h2v2H0z" fill="#b2b2b2" /></svg>
        </Grip>
      </Dialog>
    </Desktop>
  );
}
